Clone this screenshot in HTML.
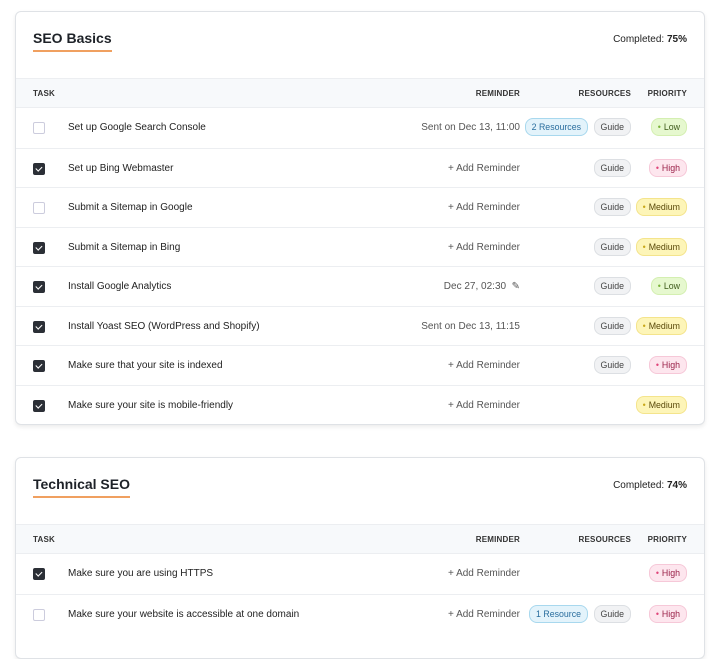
<!DOCTYPE html><html><head><style>
body{margin:0;width:719px;height:630px;background:#fff;font-family:"Liberation Sans",sans-serif;overflow:hidden;position:relative}
.card{position:absolute;left:15px;width:688px;background:#fff;border:1px solid #dfe2e6;border-radius:6px;box-shadow:0 2px 4px rgba(0,0,0,.08);overflow:hidden}
.t{position:absolute;left:17px;top:18px;font-size:14px;line-height:16px;font-weight:bold;color:#1e2228;padding-bottom:4px;border-bottom:2px solid #f0a060}
.comp{position:absolute;right:17px;top:22px;font-size:10px;color:#222}
.hd{position:absolute;left:0;right:0;height:28px;background:#f7f9fb;border-top:1px solid #eceef1;border-bottom:1px solid #eceef1;font-size:8px;font-weight:bold;color:#333;letter-spacing:.2px}
.hd div{position:absolute;top:10px}
.r{position:absolute;left:0;right:0;height:39px;border-top:1px solid #eceef1;font-size:10px;color:#222}
.r>*{position:absolute}
.cb{left:17px;top:14px;width:10px;height:10px;border:1px solid #ccd;border-radius:2px;background:#fff}
.cb.on{background:#2b2f36;border-color:#2b2f36}
.cb.on:after{content:"";position:absolute;left:3px;top:1px;width:2.5px;height:5px;border:solid #fff;border-width:0 1.5px 1.5px 0;transform:rotate(45deg)}
.tx{left:52px;top:14px}
.rem{right:184px;top:14px;color:#555}
.p{top:10px;height:16px;line-height:16px;font-size:8.8px;border-radius:8px;padding:0 6px;border:1px solid}
.g{right:73px;background:#f1f2f4;border-color:#dcdfe3;color:#444}
.res{right:116px;background:#e3f3fb;border-color:#a8d8ee;color:#2a6e9e}
.pr{right:17px}
.lo{background:#e6f8cf;border-color:#d4efb1;color:#3d5a1a}
.hi{background:#fde6ee;border-color:#f6c8d8;color:#9a2048}
.me{background:#fdf5b8;border-color:#f4e48c;color:#5a4a0a}
.pr:before{content:"•";margin-right:3px}
.lo:before{color:#7ab33a}.hi:before{color:#e0457a}.me:before{color:#c9a81a}
</style></head><body>
<div class="card" style="top:11px;height:412px">
<div class="t">SEO Basics</div><div class="comp">Completed: <b>75%</b></div>
<div class="hd" style="top:66px"><div style="left:17px">TASK</div><div style="right:184px">REMINDER</div><div style="right:73px">RESOURCES</div><div style="right:17px">PRIORITY</div></div>
<div class="r" style="top:96px;border:0"><div class="cb"></div><div class="tx">Set up Google Search Console</div><div class="rem">Sent on Dec 13, 11:00</div><div class="p res">2 Resources</div><div class="p g">Guide</div><div class="p pr lo">Low</div></div>
<div class="r" style="top:136px"><div class="cb on"></div><div class="tx">Set up Bing Webmaster</div><div class="rem">+ Add Reminder</div><div class="p g">Guide</div><div class="p pr hi">High</div></div>
<div class="r" style="top:175px"><div class="cb"></div><div class="tx">Submit a Sitemap in Google</div><div class="rem">+ Add Reminder</div><div class="p g">Guide</div><div class="p pr me">Medium</div></div>
<div class="r" style="top:215px"><div class="cb on"></div><div class="tx">Submit a Sitemap in Bing</div><div class="rem">+ Add Reminder</div><div class="p g">Guide</div><div class="p pr me">Medium</div></div>
<div class="r" style="top:254px"><div class="cb on"></div><div class="tx">Install Google Analytics</div><div class="rem">Dec 27, 02:30 &nbsp;✎</div><div class="p g">Guide</div><div class="p pr lo">Low</div></div>
<div class="r" style="top:294px"><div class="cb on"></div><div class="tx">Install Yoast SEO (WordPress and Shopify)</div><div class="rem">Sent on Dec 13, 11:15</div><div class="p g">Guide</div><div class="p pr me">Medium</div></div>
<div class="r" style="top:333px"><div class="cb on"></div><div class="tx">Make sure that your site is indexed</div><div class="rem">+ Add Reminder</div><div class="p g">Guide</div><div class="p pr hi">High</div></div>
<div class="r" style="top:373px"><div class="cb on"></div><div class="tx">Make sure your site is mobile-friendly</div><div class="rem">+ Add Reminder</div><div class="p pr me">Medium</div></div>
</div>
<div class="card" style="top:457px;height:200px">
<div class="t">Technical SEO</div><div class="comp">Completed: <b>74%</b></div>
<div class="hd" style="top:66px"><div style="left:17px">TASK</div><div style="right:184px">REMINDER</div><div style="right:73px">RESOURCES</div><div style="right:17px">PRIORITY</div></div>
<div class="r" style="top:96px;border:0"><div class="cb on"></div><div class="tx">Make sure you are using HTTPS</div><div class="rem">+ Add Reminder</div><div class="p pr hi">High</div></div>
<div class="r" style="top:136px"><div class="cb"></div><div class="tx">Make sure your website is accessible at one domain</div><div class="rem">+ Add Reminder</div><div class="p res">1 Resource</div><div class="p g">Guide</div><div class="p pr hi">High</div></div>
</div>
</body></html>
